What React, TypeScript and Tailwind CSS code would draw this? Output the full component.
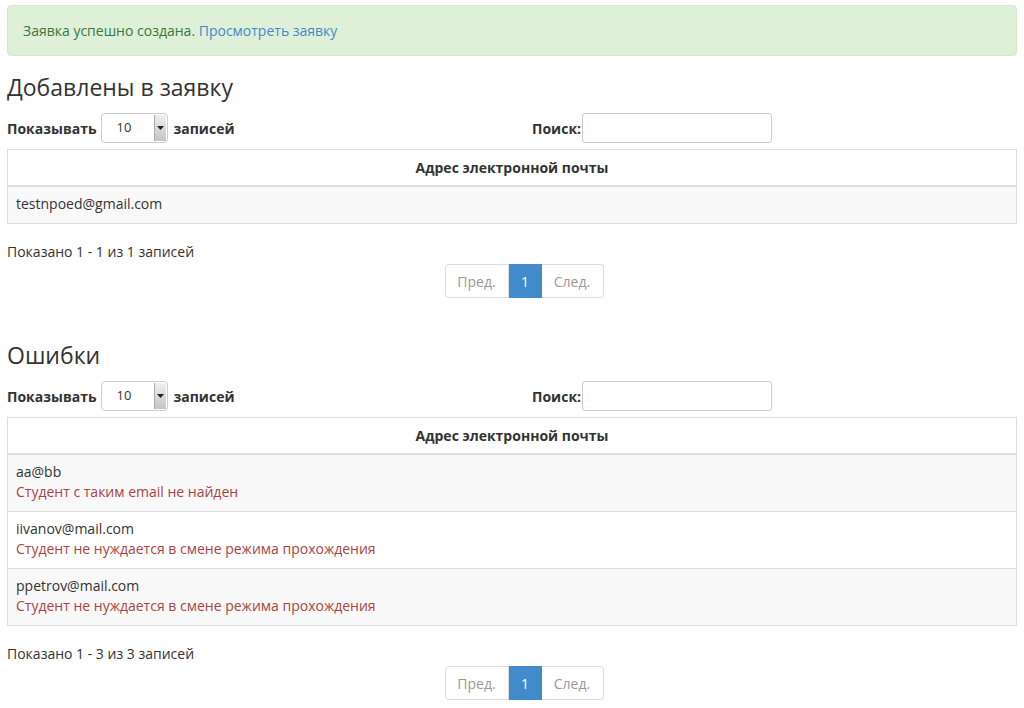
import React from "react";

function Controls() {
  return (
    <div className="grid grid-cols-[525px_auto] items-center h-[30px] mt-[13px] mb-[6px]">
      <div className="flex items-center font-bold text-[14px]">
        <span>Показывать</span>
        <div className="ml-[4px] mr-[6px] w-[67px] h-[30px] border border-[#ccc] rounded-[4px] bg-white flex items-center justify-between pl-[15px] pr-[1px] font-normal text-[13px]">
          <span>10</span>
          <div className="w-[12px] h-[26px] bg-gradient-to-b from-[#f0f0f0] to-[#c4c4c4] border-l border-[#aaa] flex items-center justify-center">
            <svg width="7" height="4" viewBox="0 0 7 4"><path d="M0 0h7L3.5 4z" fill="#222" /></svg>
          </div>
        </div>
        <span>записей</span>
      </div>
      <div className="flex items-center font-bold text-[14px]">
        <span>Поиск:</span>
        <div className="ml-[1px] w-[190px] h-[30px] border border-[#ccc] rounded-[3px] bg-white" />
      </div>
    </div>
  );
}

function Pagination() {
  return (
    <div className="flex justify-center pl-[24px] mt-[2px]">
      <div className="flex h-[34px] text-[14px]">
        <div className="w-[64px] flex items-center justify-center border border-[#ddd] rounded-l-[4px] text-[#999] bg-white">Пред.</div>
        <div className="w-[33px] flex items-center justify-center bg-[#428bca] border border-[#428bca] text-white">1</div>
        <div className="w-[62px] flex items-center justify-center border border-[#ddd] border-l-0 rounded-r-[4px] text-[#999] bg-white">След.</div>
      </div>
    </div>
  );
}

type Row = { email: string; error?: string };

function Table({ rows }: { rows: Row[] }) {
  return (
    <div className="border border-[#ddd]">
      <div className="h-[37px] border-b-2 border-[#ddd] flex items-center justify-center font-bold text-[14px]">
        Адрес электронной почты
      </div>
      {rows.map((r, i) => (
        <div
          key={i}
          className={`px-[8px] pt-[7px] pb-[9px] text-[14px] leading-[20px] ${i % 2 === 0 ? "bg-[#f9f9f9]" : "bg-white"} ${i > 0 ? "border-t border-[#ddd]" : ""}`}
        >
          <div>{r.email}</div>
          {r.error && <div className="text-[#a94442]">{r.error}</div>}
        </div>
      ))}
    </div>
  );
}

function Section({ title, rows, info }: { title: string; rows: Row[]; info: string }) {
  return (
    <div>
      <h3 className="text-[23px] leading-[26px] font-normal">{title}</h3>
      <Controls />
      <Table rows={rows} />
      <div className="mt-[18px] text-[14px] leading-[20px]">{info}</div>
      <Pagination />
    </div>
  );
}

export default function App() {
  return (
    <div
      className="w-[1024px] min-h-[708px] bg-white text-[#333] px-[7px] pt-[5px]"
      style={{ fontFamily: '"Open Sans", "Noto Sans", sans-serif' }}
    >
      <div className="h-[51px] border border-[#d6e9c6] bg-[#dff0d8] rounded-[4px] px-[15px] pb-[1px] flex items-center text-[14px] text-[#3c763d] w-[1010px]">
        <span>Заявка успешно создана.&nbsp;</span>
        <span className="text-[#428bca]">Просмотреть заявку</span>
      </div>
      <div className="mt-[18px]">
        <Section title="Добавлены в заявку" rows={[{ email: "testnpoed@gmail.com" }]} info="Показано 1 - 1 из 1 записей" />
      </div>
      <div className="mt-[44px]">
        <Section
          title="Ошибки"
          rows={[
            { email: "aa@bb", error: "Студент с таким email не найден" },
            { email: "iivanov@mail.com", error: "Студент не нуждается в смене режима прохождения" },
            { email: "ppetrov@mail.com", error: "Студент не нуждается в смене режима прохождения" },
          ]}
          info="Показано 1 - 3 из 3 записей"
        />
      </div>
    </div>
  );
}
